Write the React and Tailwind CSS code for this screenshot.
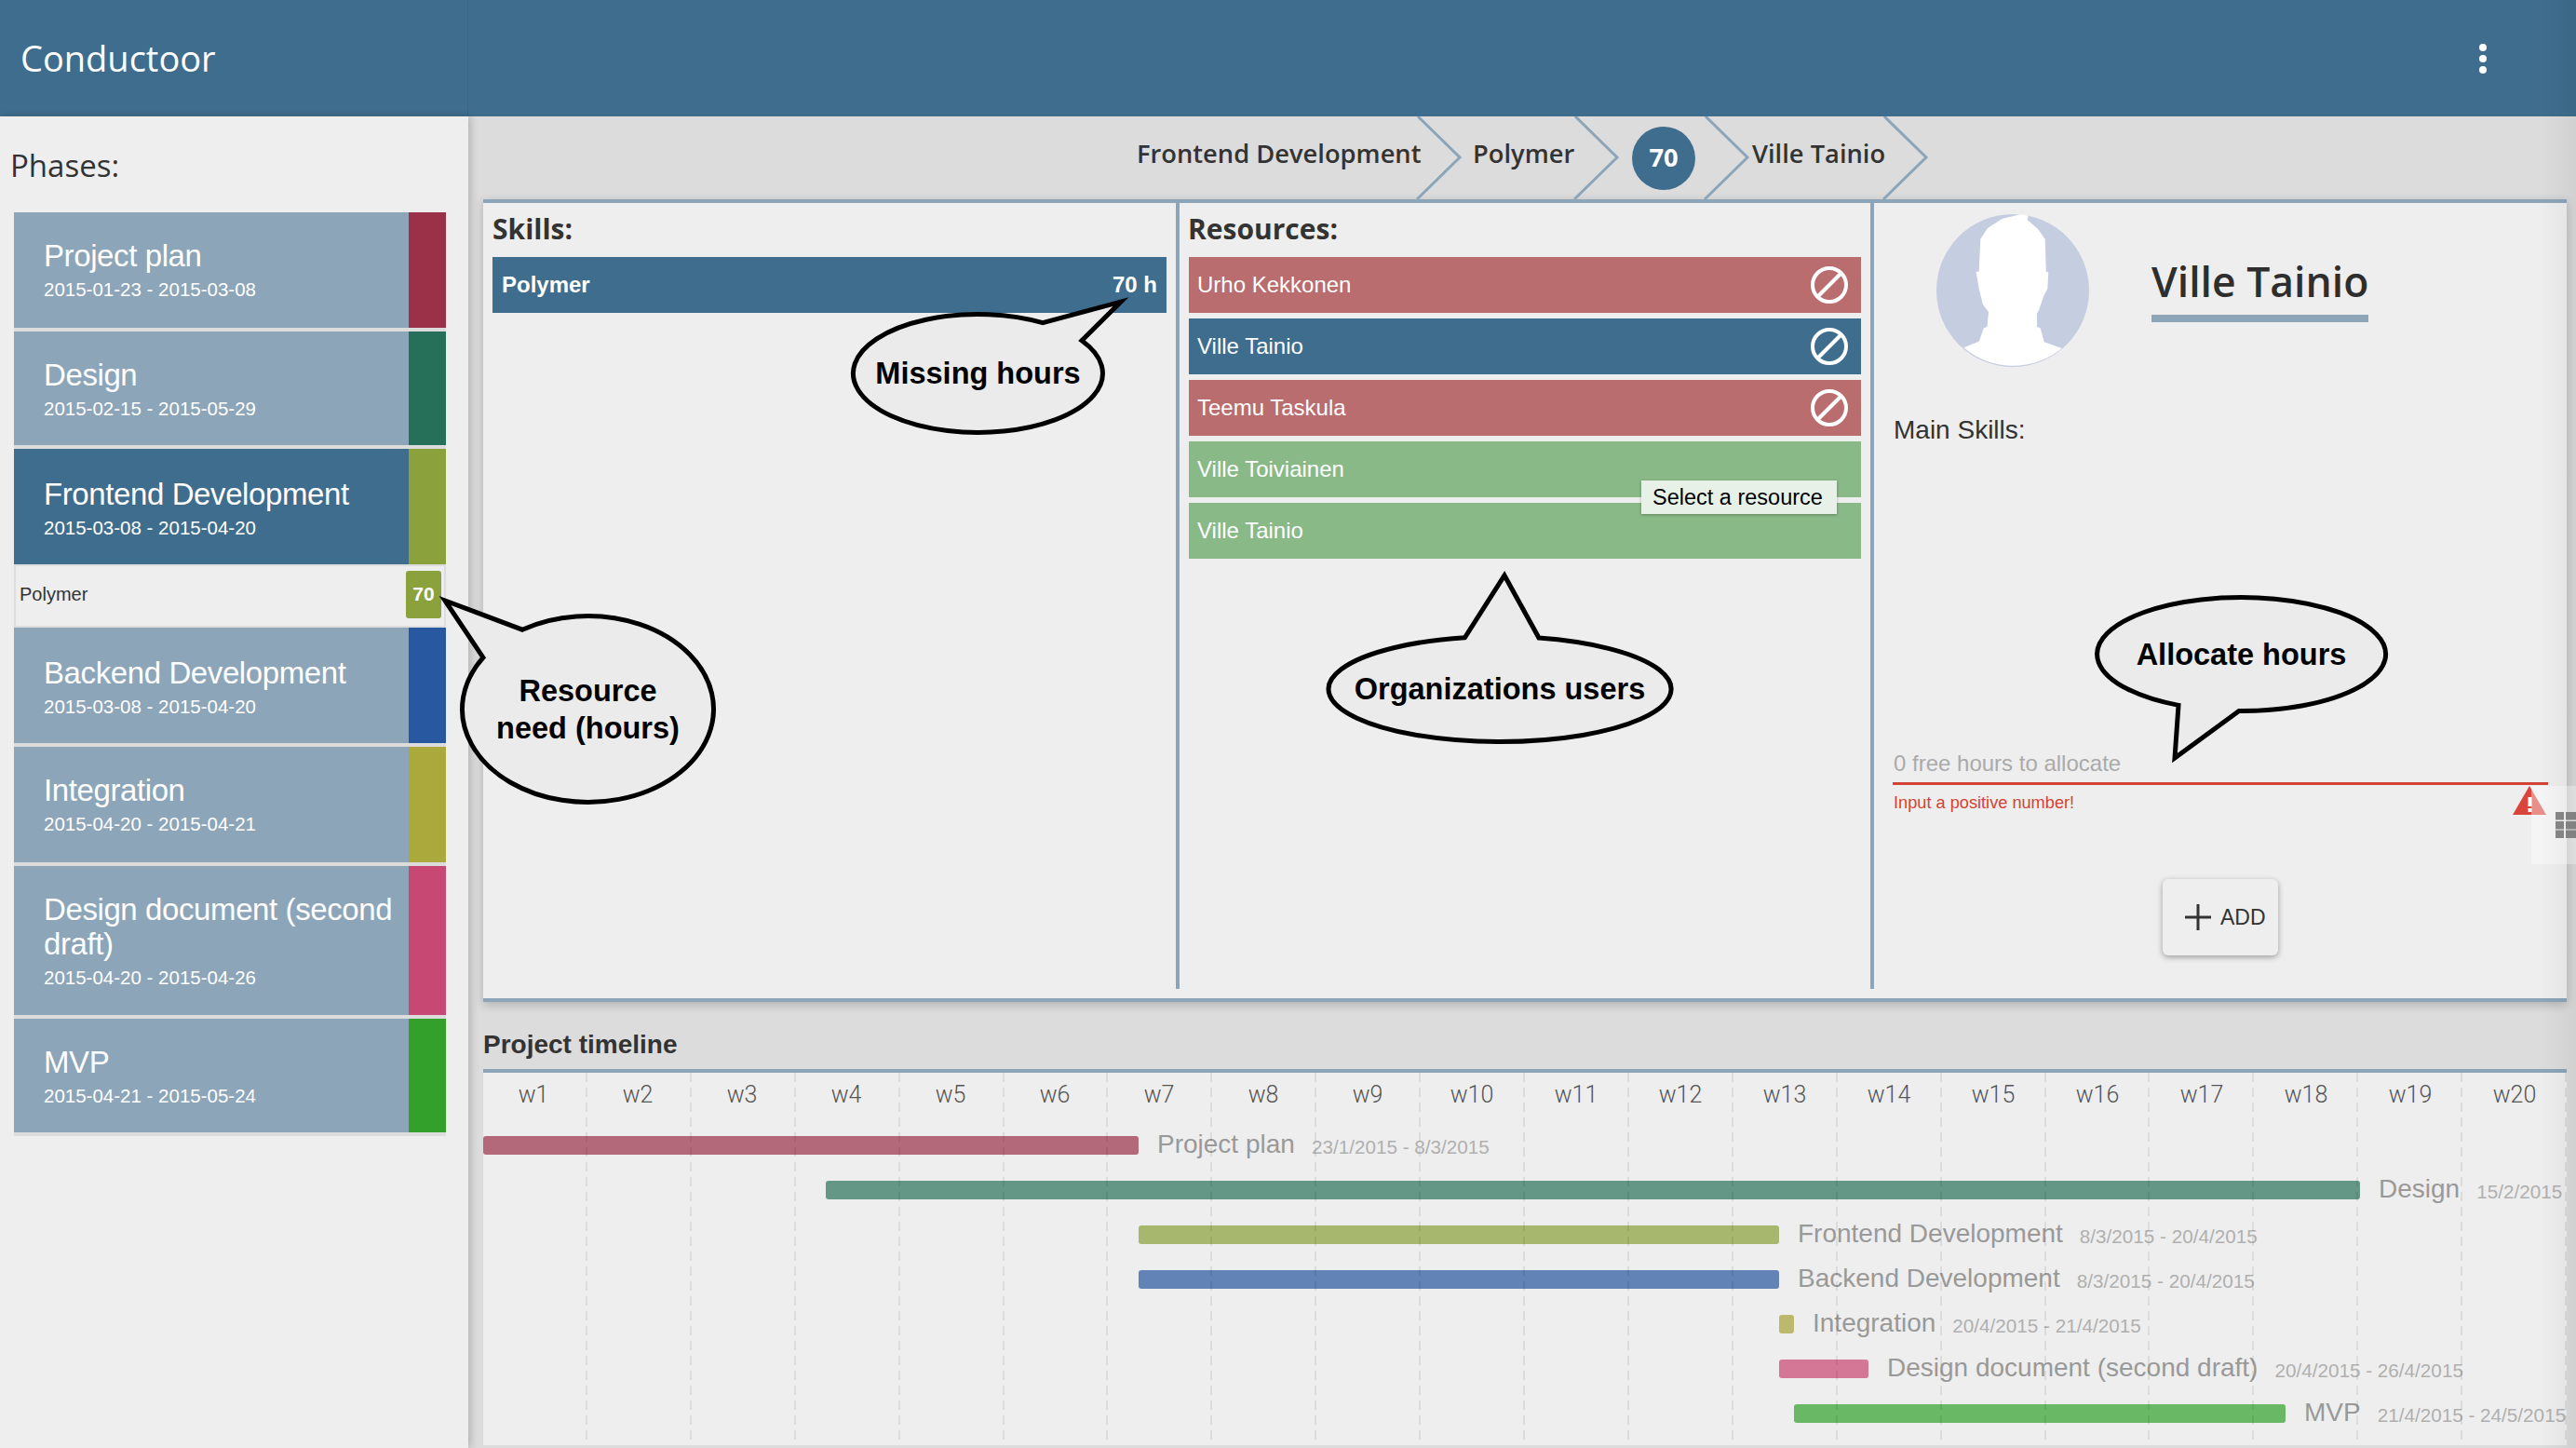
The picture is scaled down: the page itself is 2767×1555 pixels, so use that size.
import React from "react";

const phases = [
  { name: "Project plan", dates: "2015-01-23 - 2015-03-08", strip: "bg-[#9a3149]", h: "h-[124px]", pt: "pt-[28px]" },
  { name: "Design", dates: "2015-02-15 - 2015-05-29", strip: "bg-[#26705a]", h: "h-[122px]", pt: "pt-[28px]" },
  { name: "Frontend Development", dates: "2015-03-08 - 2015-04-20", strip: "bg-[#8ba23c]", h: "h-[124px]", pt: "pt-[30px]", active: true },
  { name: "Backend Development", dates: "2015-03-08 - 2015-04-20", strip: "bg-[#2858a0]", h: "h-[124px]", pt: "pt-[30px]" },
  { name: "Integration", dates: "2015-04-20 - 2015-04-21", strip: "bg-[#aba83c]", h: "h-[124px]", pt: "pt-[28px]" },
  { name: "Design document (second draft)", dates: "2015-04-20 - 2015-04-26", strip: "bg-[#c84874]", h: "h-[160px]", pt: "pt-[28px]" },
  { name: "MVP", dates: "2015-04-21 - 2015-05-24", strip: "bg-[#33a02c]", h: "h-[122px]", pt: "pt-[28px]" },
];

const resources = [
  { name: "Urho Kekkonen", color: "bg-[#b96d6e]", ban: true },
  { name: "Ville Tainio", color: "bg-[#3f6d8e]", ban: true },
  { name: "Teemu Taskula", color: "bg-[#b96d6e]", ban: true },
  { name: "Ville Toiviainen", color: "bg-[#8ab988]" },
  { name: "Ville Tainio", color: "bg-[#8ab988]" },
];

const weeks = Array.from({ length: 20 }, (_, i) => "w" + (i + 1));

// left and width are pixels from the left edge of the timeline
const bars = [
  { name: "Project plan", dates: "23/1/2015 - 8/3/2015", left: 0, width: 704, color: "bg-[#b3697a]" },
  { name: "Design", dates: "15/2/2015", left: 368, width: 1648, color: "bg-[#649786]" },
  { name: "Frontend Development", dates: "8/3/2015 - 20/4/2015", left: 704, width: 688, color: "bg-[#a7b76e]" },
  { name: "Backend Development", dates: "8/3/2015 - 20/4/2015", left: 704, width: 688, color: "bg-[#6183b5]" },
  { name: "Integration", dates: "20/4/2015 - 21/4/2015", left: 1392, width: 16, color: "bg-[#bcb96e]" },
  { name: "Design document (second draft)", dates: "20/4/2015 - 26/4/2015", left: 1392, width: 96, color: "bg-[#d47796]" },
  { name: "MVP", dates: "21/4/2015 - 24/5/2015", left: 1408, width: 528, color: "bg-[#69b865]" },
];

const Chevron = ({ className }) => (
  <svg viewBox="0 0 50 89" className={"h-[89px] w-[50px] shrink-0 " + className}>
    <polyline points="2,0 47,44 1,89" fill="none" stroke="#8ca5b8" strokeWidth="3" />
  </svg>
);

const BanIcon = () => (
  <svg viewBox="0 0 40 40" className="h-[40px] w-[40px]" fill="none" stroke="#fff" strokeWidth="4">
    <circle cx="20" cy="20" r="18" />
    <line x1="8" y1="32" x2="32" y2="8" />
  </svg>
);

// the box is the ellipse of the bubble, the tail sticks out of it
const Bubble = ({ className, viewBox, d, children }) => (
  <div className={"absolute flex items-center justify-center " + className}>
    <svg viewBox={viewBox} className="absolute inset-0 h-full w-full overflow-visible">
      <path d={d} fill="#ebebeb" stroke="#000" strokeWidth="5" />
    </svg>
    <div className="relative text-center text-[32.5px] font-bold leading-[40px] text-black">
      {children}
    </div>
  </div>
);

const Avatar = () => (
  <svg viewBox="0 0 164 164" className="h-[164px] w-[164px] shrink-0">
    <circle cx="82" cy="82" r="82" fill="#c5cde0" />
    <path
      d="M91 0 L98.7 1.7 L97.7 6 L109 16 L116.7 26.7 L117.8 61.7 L120.3 62.3 L119.3 80 L115.7 86.7 L110 103 L108 106.7 L108 121 L111.6 122.3 L115.7 137.3 L134.8 144 A82 82 0 0 1 29.3 143.3 L45.7 136.7 L50.9 122.3 L54.5 121 L56 105 L49.8 96.7 L45.7 80 L42.6 61.7 L45.7 61.7 L47.3 26.7 L55 15 L70.4 5 Z"
      fill="#fff"
    />
  </svg>
);

const App = () => {
  return (
    <div className="relative h-[1555px] w-[2767px] overflow-hidden bg-[#dcdcdc] font-['Liberation_Sans',sans-serif] text-[#333]">
      {/* Top bar */}
      <header className="flex h-[125px] items-center bg-[#3f6d8e]">
        <div className="flex h-full w-[503px] items-center border-r border-[#3a6686] pl-[22px] font-['Open_Sans',sans-serif] text-[38px] font-medium text-white">
          Conductoor
        </div>
        <div className="ml-auto mr-[96px] flex flex-col gap-[4px]">
          <span className="h-[8px] w-[8px] rounded-full bg-white" />
          <span className="h-[8px] w-[8px] rounded-full bg-white" />
          <span className="h-[8px] w-[8px] rounded-full bg-white" />
        </div>
      </header>

      <div className="flex h-[1430px]">
        {/* Phases */}
        <aside className="w-[503px] shrink-0 bg-[#eee] shadow-[3px_0_8px_rgba(0,0,0,0.18)]">
          <h2 className="pl-[11px] pt-[31px] font-['Open_Sans',sans-serif] text-[33px] font-medium leading-[44px] text-[#333]">
            Phases:
          </h2>
          <div className="ml-[15px] mt-[28px] w-[464px]">
            {phases.map((phase) => (
              <React.Fragment key={phase.name}>
                <div
                  className={
                    "flex border-[#dcdcdc] " +
                    phase.h +
                    (phase.active ? " bg-[#3f6d8e]" : " box-content border-b-4 bg-[#8ca5b8]")
                  }
                >
                  <div className={"flex-1 pl-[32px] pr-[10px] text-white " + phase.pt}>
                    <div className="text-[33px] leading-[37px] tracking-[-0.4px]">{phase.name}</div>
                    <div className="mt-[5px] text-[20.5px] leading-[26px]">{phase.dates}</div>
                  </div>
                  <div className={"w-[40px] shrink-0 " + phase.strip} />
                </div>
                {phase.active && (
                  <div className="flex h-[68px] items-center justify-between border-2 border-[#ddd] bg-[#eee] pb-[4px] pl-[4px] pr-[3px]">
                    <span className="text-[20px] text-[#333]">Polymer</span>
                    <span className="flex h-[51px] w-[38px] items-center justify-center rounded-[3px] bg-[#8ba23c] text-[21px] font-bold text-white">
                      70
                    </span>
                  </div>
                )}
              </React.Fragment>
            ))}
          </div>
        </aside>

        <main className="min-w-0 flex-1">
          {/* Breadcrumb */}
          <div className="flex h-[89px] items-center pl-[718px] font-['Open_Sans',sans-serif] text-[27.3px] font-semibold text-[#333]">
            <span className="w-[300px] shrink-0 whitespace-nowrap pb-[8px]">Frontend Development</span>
            <Chevron className="" />
            <span className="ml-[11px] w-[109px] shrink-0 pb-[8px]">Polymer</span>
            <Chevron className="-ml-[1px]" />
            <span className="ml-[13px] flex h-[68px] w-[68px] shrink-0 items-center justify-center rounded-full bg-[#3f6d8e] font-bold text-white">
              70
            </span>
            <Chevron className="ml-[9px]" />
            <span className="ml-[2px] w-[140px] shrink-0 whitespace-nowrap pb-[8px]">Ville Tainio</span>
            <Chevron className="" />
          </div>

          {/* Skills, resources, details */}
          <section className="ml-[16px] mr-[10px] h-[862px] border-y-4 border-[#8ca5b8] bg-[#eee] shadow-[0_3px_10px_rgba(0,0,0,0.2)]">
            <div className="flex h-[844px]">
              <div className="w-[748px] shrink-0 border-r-4 border-[#8ca5b8] px-[10px]">
                <h3 className="pt-[8px] font-['Open_Sans',sans-serif] text-[30px] font-bold leading-[40px]">Skills:</h3>
                <div className="mt-[10px] flex h-[60px] items-center justify-between bg-[#3f6d8e] px-[10px] text-[24px] font-bold text-white">
                  <span>Polymer</span>
                  <span>70 h</span>
                </div>
              </div>

              <div className="relative w-[746px] shrink-0 border-r-4 border-[#8ca5b8] px-[10px]">
                <h3 className="-ml-[1px] pt-[8px] font-['Open_Sans',sans-serif] text-[30px] font-bold leading-[40px]">Resources:</h3>
                <div className="mt-[10px] flex flex-col gap-[6px]">
                  {resources.map((res, i) => (
                    <div key={i} className={"flex h-[60px] items-center justify-between pl-[9px] pr-[14px] text-[24px] text-white " + res.color}>
                      <span>{res.name}</span>
                      {res.ban && <BanIcon />}
                    </div>
                  ))}
                </div>
                <div className="absolute left-[496px] top-[298px] flex h-[36px] w-[210px] items-center bg-[#e8f1e8] pl-[12px] pt-[2px] text-[23.5px] text-black shadow-[0_1px_3px_rgba(0,0,0,0.3)]">
                  Select a resource
                </div>
              </div>

              <div className="min-w-0 flex-1">
                <div className="flex pl-[67px] pt-[12px]">
                  <Avatar />
                  <div className="ml-[67px] pt-[46px]">
                    <div className="font-['Open_Sans',sans-serif] text-[44.5px] font-semibold leading-[52px] text-[#2e2e2e]">Ville Tainio</div>
                    <div className="mt-[10px] h-[8px] bg-[#8ca5b8]" />
                  </div>
                </div>
                <div className="ml-[21px] mt-[52px] text-[28px] leading-[32px]">Main Skills:</div>
                <div className="ml-[20px] mt-[326px] w-[704px] border-b-[3px] border-[#d34336] pb-[4px] pl-[1px] text-[24px] leading-[32px] text-[#aaa]">
                  0 free hours to allocate
                </div>
                <div className="ml-[21px] mt-[7px] text-[18.2px] leading-[24px] text-[#d34336]">Input a positive number!</div>
                <button className="ml-[310px] mt-[70px] flex h-[82px] w-[124px] items-center rounded-[6px] bg-[#eee] pl-[24px] text-[23px] text-[#333] shadow-[0_2px_6px_rgba(0,0,0,0.35)]">
                  <svg viewBox="0 0 28 28" className="mr-[10px] h-[28px] w-[28px] shrink-0" fill="#333">
                    <rect x="12.5" y="0" width="3" height="28" />
                    <rect x="0" y="12.5" width="28" height="3" />
                  </svg>
                  ADD
                </button>
              </div>
            </div>
          </section>

          {/* Timeline */}
          <h3 className="ml-[16px] mt-[28px] text-[28px] font-bold leading-[36px]">Project timeline</h3>
          <section className="relative ml-[16px] mr-[10px] mt-[8px] h-[404px] border-t-4 border-[#8ca5b8] bg-[#eee]">
            <div className="-ml-[2px] grid h-[48px] grid-cols-20 text-center font-['Roboto',sans-serif] text-[25px] font-light leading-[48px] text-[#555]">
              {weeks.map((w) => (
                <span key={w}>{w}</span>
              ))}
            </div>
            <div className="mt-[6px] overflow-hidden">
              {bars.map((bar) => (
                <div key={bar.name} className="flex h-[48px] items-center whitespace-nowrap" style={{ paddingLeft: bar.left }}>
                  <div className={"h-[20px] shrink-0 rounded-[3px] " + bar.color} style={{ width: bar.width }} />
                  <span className="mb-[2px] ml-[20px] text-[28px] text-[#999]">{bar.name}</span>
                  <span className="ml-[18px] mt-[4px] text-[20.7px] text-[#b0b0b0]">{bar.dates}</span>
                </div>
              ))}
            </div>
            {/* week separators run over the bars */}
            <div className="pointer-events-none absolute inset-0 grid grid-cols-20">
              {weeks.map((w) => (
                <div key={w} className="flex justify-end">
                  <div className="h-full w-[2px] bg-[repeating-linear-gradient(to_bottom,rgba(0,0,0,0.08)_0,rgba(0,0,0,0.08)_10px,transparent_10px,transparent_16px)]" />
                </div>
              ))}
            </div>
          </section>
        </main>
      </div>

      {/* Callouts */}
      <Bubble
        className="left-[494px] top-[659px] h-[205px] w-[275px]"
        viewBox="494 659 275 205"
        d="M561 676.2 A135 100 0 1 1 519 706.2 L478 645 Z"
      >
        Resource
        <br />
        need (hours)
      </Bubble>
      <Bubble
        className="left-[914px] top-[335px] h-[132px] w-[273px]"
        viewBox="914 335 273 132"
        d="M1162 365.8 A134 63.5 0 1 1 1120 346.7 L1204 324 Z"
      >
        Missing hours
      </Bubble>
      <Bubble
        className="left-[1424px] top-[681px] h-[118px] w-[374px]"
        viewBox="1424 681 374 118"
        d="M1653 685 A184 56.5 0 1 1 1573.5 684.7 L1616 618 Z"
      >
        Organizations users
      </Bubble>
      <Bubble
        className="left-[2250px] top-[639px] h-[127px] w-[315px]"
        viewBox="2250 639 315 127"
        d="M2340 757.4 A155 61 0 1 1 2405 763.5 L2336 814 Z"
      >
        Allocate hours
      </Bubble>

      {/* Warning sign with the half transparent side tab over it */}
      <svg viewBox="0 0 36 31" className="absolute left-[2699px] top-[844px] h-[31px] w-[36px]">
        <polygon points="18,0 36,31 0,31" fill="#d9453c" />
        <rect x="16.5" y="12" width="4" height="10" fill="#fff" />
        <rect x="16.5" y="24" width="4" height="4" fill="#fff" />
      </svg>
      <div className="absolute left-[2719px] top-[844px] h-[84px] w-[48px] bg-white/40" />
      <svg viewBox="0 0 22 28" className="absolute left-[2745px] top-[872px] h-[28px] w-[22px]" fill="#888">
        <rect x="0" y="0" width="9" height="8.5" />
        <rect x="11" y="0" width="11" height="8.5" />
        <rect x="0" y="10" width="9" height="8.5" />
        <rect x="11" y="10" width="11" height="8.5" />
        <rect x="0" y="19.5" width="9" height="8.5" />
        <rect x="11" y="19.5" width="11" height="8.5" />
      </svg>

      {/* Soft shade along the right edge */}
      <div className="pointer-events-none absolute inset-y-0 right-0 w-[40px] bg-gradient-to-l from-black/5 to-transparent" />
    </div>
  );
};

export default App;
